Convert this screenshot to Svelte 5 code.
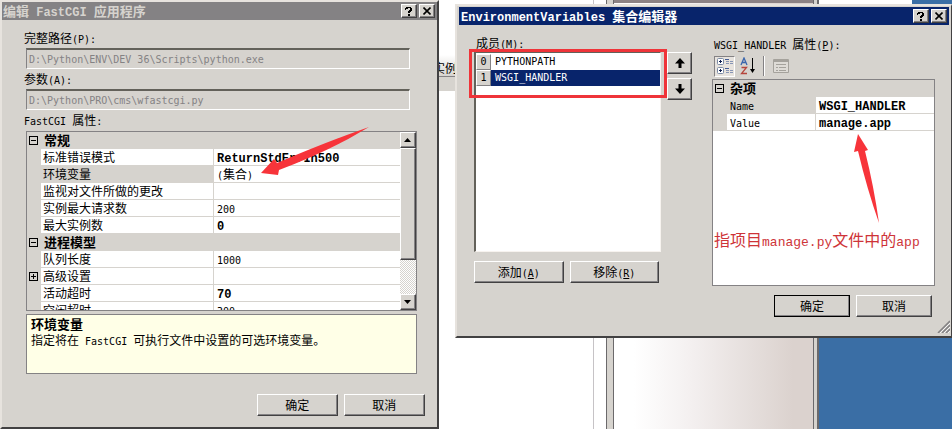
<script>
  let path = "D:\\Python\\ENV\\DEV_36\\Scripts\\python.exe";
  let args = "D:\\Python\\PRO\\cms\\wfastcgi.py";

  const settings = [
    { group: "常规" },
    { name: "标准错误模式", value: "ReturnStdErrIn500", bold: true },
    { name: "环境变量", value: "(集合)", selected: true },
    { name: "监视对文件所做的更改", value: "" },
    { name: "实例最大请求数", value: "200" },
    { name: "最大实例数", value: "0", bold: true },
    { group: "进程模型" },
    { name: "队列长度", value: "1000" },
    { name: "高级设置", value: "", expandable: true },
    { name: "活动超时", value: "70", bold: true },
    { name: "空闲超时", value: "300" }
  ];

  const variable = [
    { group: "杂项" },
    { name: "Name", value: "WSGI_HANDLER", bold: true, selected: true },
    { name: "Value", value: "manage.app", bold: true }
  ];

  const members = ["PYTHONPATH", "WSGI_HANDLER"];
  let current = 1;

  // latin runs are set narrower than the chinese ones
  const runs = text => text.split(/([\x20-\x7e]+)/).filter(r => r);
  const isLatin = run => /^[\x20-\x7e]/.test(run);
</script>

{#snippet mixed(text)}{#each runs(text) as run}{#if isLatin(run)}<span class="latin">{run}</span>{:else}{run}{/if}{/each}{/snippet}

{#snippet keyed(text, key, end)}<span>{@render mixed(text)}<span class="latin">(<u>{key}</u>){end}</span></span>{/snippet}

{#snippet box(plus)}
  <svg class="box" viewBox="0 0 9 9" width="9" height="9" shape-rendering="crispEdges">
    <path d="M0 0h9v9h-9zM1 1v7h7v-7zM2 4h5v1h-5z" fill="#000" fill-rule="evenodd" />
    {#if plus}<path d="M4 2h1v5h-1z" fill="#000" />{/if}
  </svg>
{/snippet}

{#snippet properties(rows)}
  <table>
    <colgroup><col class="gutter" /><col class="names" /><col /></colgroup>
    <tbody>
      {#each rows as row}
        {#if row.group}
          <tr class="group">
            <td>{@render box(false)}</td>
            <th colspan="2">{row.group}</th>
          </tr>
        {:else}
          <tr class:selected={row.selected}>
            <td class="side">{#if row.expandable}{@render box(true)}{/if}</td>
            <td class="name">{@render mixed(row.name)}</td>
            <td class="value" class:bold={row.bold}>{@render mixed(row.value)}</td>
          </tr>
        {/if}
      {/each}
    </tbody>
  </table>
{/snippet}

{#snippet caption(text)}
  <header>
    <h1>{@render mixed(text)}</h1>
    <button class="sys" aria-label="Help">
      <svg viewBox="0 0 8 9" width="8" height="9" shape-rendering="crispEdges">
        <path d="M1 0h5v1h1v3h-1v1h-1v1h-2v-2h1v-1h1v-2h-2v1h-2v1h-1v-2h1zM3 7h2v2h-2z" />
      </svg>
    </button>
    <button class="sys" aria-label="Close">
      <svg viewBox="0 0 8 8" width="8" height="8">
        <path d="M0.5 0.5L7.5 7.5M7.5 0.5L0.5 7.5" stroke="#000" stroke-width="1.6" />
      </svg>
    </button>
  </header>
{/snippet}

<main>
  <div class="backdrop">
    <div class="page"><div class="strip"><span>实例</span></div></div>
    <div class="edge"></div>
    <div class="splitter"></div>
    <div class="panel"></div>
    <div class="frame"></div>
    <div class="blue"></div>
  </div>

  <section class="window fastcgi">
    {@render caption("编辑 FastCGI 应用程序")}
    <div class="form">
      <label for="path">{@render mixed("完整路径(P):")}</label>
      <input id="path" type="text" bind:value={path} disabled />
      <label for="args">{@render mixed("参数(A):")}</label>
      <input id="args" type="text" bind:value={args} disabled />
      <div class="label">{@render mixed("FastCGI 属性:")}</div>
      <div class="grid">
        <div class="rows">{@render properties(settings)}</div>
        <div class="scroll">
          <button class="raised" aria-label="Up">
            <svg viewBox="0 0 7 4" width="7" height="4"><path d="M0 4L3.5 0L7 4z" /></svg>
          </button>
          <div class="thumb raised"></div>
          <div class="track"></div>
          <button class="raised" aria-label="Down">
            <svg viewBox="0 0 7 4" width="7" height="4"><path d="M0 0L3.5 4L7 0z" /></svg>
          </button>
        </div>
      </div>
      <div class="help">
        <h2>环境变量</h2>
        <p>{@render mixed("指定将在 FastCGI 可执行文件中设置的可选环境变量。")}</p>
      </div>
      <div class="actions">
        <button class="raised push">确定</button>
        <button class="raised push">取消</button>
      </div>
    </div>
    <svg class="arrow to-value" viewBox="0 0 112 50" width="112" height="50">
      <path d="M1 47L14 33L17 37Q66 16 109 1Q70 25 19 44L18 49z" />
    </svg>
  </section>

  <section class="window editor">
    {@render caption("EnvironmentVariables 集合编辑器")}
    <div class="columns">
      <div class="members">
        <div class="label">{@render keyed("成员", "M", ":")}</div>
        <div class="picker">
          <ul>
            {#each members as member, i}
              <li>
                <button class:current={i === current}>
                  <span class="index">{i}</span><span class="member">{member}</span>
                </button>
              </li>
            {/each}
          </ul>
          <div class="order">
            <button class="raised" aria-label="Move up">
              <svg viewBox="0 0 10 10" width="10" height="10"><path d="M5 0L10 5.5H6.5V10H3.5V5.5H0z" /></svg>
            </button>
            <button class="raised" aria-label="Move down">
              <svg viewBox="0 0 10 10" width="10" height="10"><path d="M5 10L10 4.5H6.5V0H3.5V4.5H0z" /></svg>
            </button>
          </div>
          <div class="marker"></div>
        </div>
        <div class="edit">
          <button class="raised push">{@render keyed("添加", "A", "")}</button>
          <button class="raised push">{@render keyed("移除", "R", "")}</button>
        </div>
      </div>
      <div class="details">
        <div class="label">{@render keyed("WSGI_HANDLER 属性", "P", ":")}</div>
        <div class="toolbar">
          <button class="pressed" aria-label="Categorized">
            <svg viewBox="0 0 18 18" width="18" height="18">
              <g fill="#fff" stroke="#7b8ba5"><rect x="1.5" y="1.5" width="6" height="6" rx="1" /><rect x="1.5" y="10.5" width="6" height="6" rx="1" /></g>
              <path d="M3 4.5h3M4.5 3v3M3 13.5h3M4.5 12v3" stroke="#102050" />
              <path d="M9 2.5h4M9 11.5h4" stroke="#445c94" />
              <path d="M10 4.5h3M14 4.5h3M10 6.5h3M14 6.5h3M10 13.5h3M14 13.5h3M10 15.5h3M14 15.5h3" stroke="#8795b5" />
            </svg>
          </button>
          <button aria-label="Alphabetical">
            <svg viewBox="0 0 16 18" width="16" height="18" fill="none">
              <path d="M1 8L4 1L7 8M2 5.5h4" stroke="#3965ad" stroke-width="1.3" />
              <path d="M1.5 10.5H6.5L1.5 16.5H7" stroke="#b5453c" stroke-width="1.3" />
              <path d="M12.5 1V15" stroke="#000" />
              <path d="M10 12h5l-2.5 4z" fill="#000" />
            </svg>
          </button>
          <i></i>
          <button aria-label="Property pages" disabled>
            <svg viewBox="0 0 16 16" width="16" height="16" fill="none" stroke="#a5a29c">
              <path d="M.5 1.5h15v13h-15z" fill="#dedbd6" />
              <path d="M1 3h14" stroke-width="2" />
              <path d="M3 6.5h10M3 9.5h2M6 9.5h7M3 12.5h2M6 12.5h7" />
            </svg>
          </button>
        </div>
        <div class="grid">
          <div class="rows">{@render properties(variable)}</div>
          <p class="note">{@render mixed("指项目manage.py文件中的app")}</p>
        </div>
        <div class="actions">
          <button class="raised push default">确定</button>
          <button class="raised push">取消</button>
        </div>
      </div>
    </div>
    <svg class="arrow to-app" viewBox="0 0 28 92" width="28" height="92">
      <path d="M5 1L15 17L12 18Q21 54 26 90Q14 56 5 18L1 19z" />
    </svg>
    <svg class="grip" viewBox="0 0 13 13" width="13" height="13">
      <path d="M1 13L13 1M5 13L13 5M9 13L13 9" stroke="#848284" stroke-width="1.6" />
      <path d="M3 13L13 3M7 13L13 7M11 13L13 11" stroke="#fff" stroke-width=".8" />
    </svg>
  </section>
</main>

<style>
  :global(body) {
    margin: 0;
    overflow: hidden;
  }
  * {
    box-sizing: border-box;
  }
  main {
    position: relative;
    height: 100vh;
    min-height: 429px;
    overflow: hidden;
    color: #000;
    font: 12px/16px "Noto Sans CJK SC", sans-serif;
  }
  .latin,
  .index,
  .member {
    font-family: "DejaVu Sans Mono", "Liberation Mono", monospace;
    font-size: 10px;
    line-height: 10px;
    white-space: pre;
  }
  h1,
  h2,
  p,
  ul {
    margin: 0;
    padding: 0;
  }
  button {
    display: flex;
    align-items: center;
    justify-content: center;
    margin: 0;
    padding: 0;
    border: 0;
    background: #d6d3ce;
    color: #000;
    font: inherit;
    white-space: nowrap;
  }

  /* what shows behind the dialogs */
  .backdrop {
    display: flex;
    height: 100%;
    background: #fff;
  }
  .page {
    width: 62.4%;
    padding-top: 55px;
    border-right: 1px solid #c6c3c6;
  }
  .strip {
    height: 36px;
    padding: 5px 0 0 73%;
    background: linear-gradient(#fff, #d6d3ce 60%);
  }
  .strip span {
    display: inline-block;
    padding-right: 2px;
    border-bottom: 1px solid #848284;
  }
  .edge {
    width: 12px;
  }
  .splitter {
    width: 8px;
    border: solid #6b696b;
    border-width: 0 1px;
    background: #d6d3ce;
  }
  .panel {
    width: 20.9%;
    border-top: 3px solid #8c8284;
    background: linear-gradient(90deg, #fff 10%, #f3efef 40%, #dbd2ce 90%);
  }
  .frame {
    width: 6px;
    border: solid #6b696b;
    border-width: 0 2px 0 1px;
    background: #d6d3ce;
  }
  .blue {
    flex: 1;
    background: linear-gradient(90deg, #fff 70%, #3a6ea5 70%) 0 0 / 100% 4px no-repeat #3a6ea5;
  }

  .window {
    position: absolute;
    border: solid;
    border-color: #e7e3de #424142 #424142 #e7e3de;
    background: #d6d3ce;
  }
  .fastcgi {
    top: 0;
    left: 0;
    width: 46.1%;
    min-height: 429px;
    border-width: 2px;
  }
  .editor {
    top: 4px;
    right: 0;
    width: 52.2%;
    padding: 1px 0 0 2px;
    border-width: 2px 1px 2px 2px;
  }
  header {
    display: flex;
    align-items: center;
    height: 18px;
    padding-right: 2px;
    background: #848284;
    color: #d6d3ce;
  }
  .editor header {
    margin-right: 2px;
    background: #08246b;
    color: #fff;
  }
  h1 {
    flex: 1;
    padding-left: 1px;
    font-size: 13px;
    line-height: 18px;
  }
  .editor h1 {
    padding-left: 2px;
  }
  h1 .latin,
  .bold .latin {
    font-family: "Liberation Mono", monospace;
    font-size: 12px;
    font-weight: bold;
  }
  .raised,
  .sys {
    border: 1px solid;
    border-color: #fff #424142 #424142 #fff;
    background: #d6d3ce;
    box-shadow: inset -1px -1px #848284;
  }
  .sys {
    width: 16px;
    height: 14px;
    margin-left: 2px;
  }
  label,
  .label {
    display: block;
    line-height: 20px;
  }
  .push {
    height: 22px;
  }

  .form {
    padding: 8px 12px 0 24px;
  }
  label,
  .form .label {
    margin-left: -2px;
  }
  input {
    display: block;
    width: calc(100% - 15px);
    height: 21px;
    padding: 0 2px;
    border: solid;
    border-width: 2px 1px 1px 1px;
    border-color: #63615a #fff #fff #848284;
    border-radius: 0;
    background: #d6d3ce;
    color: #848284;
    font: 10px/16px "DejaVu Sans Mono", "Liberation Mono", monospace;
  }
  .grid {
    border: 1px solid #848284;
    background: #fff;
  }
  .form .grid {
    display: flex;
    height: 180px;
    margin: 1px 8px 0 0;
  }
  .rows {
    flex: 1;
    overflow: hidden;
  }
  table {
    width: 100%;
    border-spacing: 0;
    table-layout: fixed;
  }
  .gutter {
    width: 14px;
  }
  .names {
    width: 173px;
  }
  .details .names {
    width: 89px;
  }
  td,
  th {
    height: 17px;
    padding: 0 0 0 3px;
    border-bottom: 1px solid #d6d3ce;
    line-height: 16px;
    text-align: left;
    white-space: nowrap;
  }
  td:first-child {
    padding: 0 0 0 2px;
  }
  .name {
    padding-left: 2px;
    border-right: 1px solid #d6d3ce;
  }
  .details .name {
    padding-left: 3px;
  }
  .group td,
  .group th,
  .side,
  .selected .name {
    background: #d6d3ce;
  }
  th,
  h2 {
    font-size: 13px;
    font-weight: bold;
  }
  .box {
    display: block;
  }
  .scroll {
    display: flex;
    flex-direction: column;
    width: 16px;
  }
  .scroll button {
    height: 16px;
  }
  .thumb {
    flex: 112;
  }
  .track {
    flex: 34;
    background: repeating-conic-gradient(#fff 0 25%, #d6d3ce 0 50%) 0 0 / 2px 2px;
  }
  .help {
    height: 60px;
    margin: 3px 8px 0 0;
    padding: 0 4px;
    border: 1px solid #848284;
    background: #ffffe7;
  }
  h2 {
    line-height: 17px;
  }
  .actions {
    display: flex;
    justify-content: flex-end;
    gap: 6px;
  }
  .form .actions {
    padding-top: 20px;
  }
  .form .push {
    width: 81px;
  }

  .columns {
    display: flex;
    gap: 20px;
    padding: 9px 16px 19px 15px;
  }
  .members {
    flex: 218;
  }
  .details {
    flex: 223;
  }
  .columns .label {
    padding-left: 2px;
    line-height: 19px;
  }
  .members .label {
    line-height: 18px;
  }
  .picker {
    position: relative;
    display: flex;
    gap: 6px;
  }
  ul {
    flex: 1;
    height: 200px;
    padding-top: 1px;
    border: solid;
    border-width: 1px 1px 1px 2px;
    border-color: #63615a #f7f3ef #f7f3ef #63615a;
    background: #fff;
    list-style: none;
  }
  li button {
    justify-content: flex-start;
    width: 100%;
    height: 16px;
    background: #fff;
  }
  .index {
    width: 15px;
    border: 1px solid;
    border-color: #fff #848284 #848284 #fff;
    background: #d6d3ce;
    color: #000;
    line-height: 14px;
    text-align: center;
  }
  .member {
    padding-left: 4px;
  }
  .current {
    background: #08246b;
    color: #fff;
  }
  .order {
    display: flex;
    flex-direction: column;
    gap: 4px;
  }
  .order button {
    width: 25px;
    height: 22px;
  }
  .marker {
    position: absolute;
    top: -3px;
    left: -5px;
    right: 25px;
    height: 49px;
    border: 3px solid #ef3439;
  }
  .edit {
    display: flex;
    gap: 6px;
    padding: 9px 33px 0 0;
  }
  .edit .push {
    flex: 1;
  }
  .toolbar {
    display: flex;
    align-items: center;
    height: 26px;
    gap: 2px;
    padding-left: 2px;
  }
  .toolbar button {
    width: 21px;
    height: 21px;
  }
  .toolbar .pressed {
    border: 1px solid;
    border-color: #848284 #fff #fff #848284;
    background: #e7e3de;
  }
  .toolbar i {
    width: 2px;
    height: 20px;
    margin: 0 3px;
    border-left: 1px solid #848284;
    border-right: 1px solid #fff;
  }
  .details .grid {
    height: 207px;
  }
  .note {
    padding: 98px 0 0 1px;
    color: #ce3438;
    font-size: 16px;
    line-height: 20px;
    white-space: nowrap;
  }
  .note .latin {
    font-family: "Liberation Mono", monospace;
    font-size: 13px;
  }
  .details .actions {
    padding: 9px 3px 0 0;
  }
  .details .push {
    width: 76px;
  }
  .default {
    outline: 1px solid #000;
    outline-offset: -1px;
  }
  .arrow {
    position: absolute;
    fill: #f7343a;
  }
  .to-value {
    top: 124px;
    left: 258px;
  }
  .to-app {
    top: 127px;
    right: 70px;
  }
  .grip {
    position: absolute;
    right: 1px;
    bottom: 3px;
  }
</style>
